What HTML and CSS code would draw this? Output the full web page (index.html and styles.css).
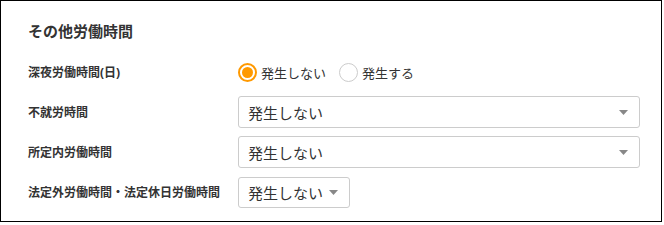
FILE: index.html
```html
<!DOCTYPE html>
<html lang="ja">
<head>
    <meta charset="UTF-8">
    <title>その他労働時間</title>
    <link rel="stylesheet" href="styles.css">
</head>
<body>
    <div class="panel">
        <h2>その他労働時間</h2>

        <div class="form-grid">
            <div class="label">深夜労働時間(日)</div>
            <div class="radio-group">
                <label class="radio checked">
                    <span class="circle"></span>
                    発生しない
                </label>
                <label class="radio">
                    <span class="circle"></span>
                    発生する
                </label>
            </div>

            <div class="label">不就労時間</div>
            <div class="select">
                <span>発生しない</span>
                <svg class="arrow" width="9" height="5" viewBox="0 0 9 5"><path d="M0 0h9L4.5 5z" fill="#888"/></svg>
            </div>

            <div class="label">所定内労働時間</div>
            <div class="select">
                <span>発生しない</span>
                <svg class="arrow" width="9" height="5" viewBox="0 0 9 5"><path d="M0 0h9L4.5 5z" fill="#888"/></svg>
            </div>

            <div class="label">法定外労働時間・法定休日労働時間</div>
            <div>
                <div class="select small">
                    <span>発生しない</span>
                    <svg class="arrow" width="9" height="5" viewBox="0 0 9 5"><path d="M0 0h9L4.5 5z" fill="#888"/></svg>
                </div>
            </div>
        </div>
    </div>
</body>
</html>
```

FILE: styles.css
```css
:root {
    --text: #333333;
    --border: #cccccc;
    --accent: #ff9900;
}

body {
    margin: 0;
    background: #ffffff;
    font-family: "Noto Sans", "Noto Sans CJK JP", sans-serif;
    color: var(--text);
}

.panel {
    box-sizing: border-box;
    width: 662px;
    height: 222px;
    border: 1px solid #000;
    padding: 19px 21px 0 27px;
}

h2 {
    margin: 0 0 14px;
    font-size: 15px;
    line-height: 22px;
    font-weight: 700;
}

.form-grid {
    display: grid;
    grid-template-columns: 210px 1fr;
    grid-auto-rows: 32px;
    row-gap: 8px;
    align-items: center;
}

.label {
    font-size: 12px;
    font-weight: 700;
}

.radio-group {
    display: flex;
    align-items: center;
    gap: 13px;
    font-size: 13px;
}

.radio {
    display: flex;
    align-items: center;
    gap: 4px;
    cursor: pointer;
}

.circle {
    box-sizing: border-box;
    width: 19px;
    height: 19px;
    border: 1px solid var(--border);
    border-radius: 50%;
    display: flex;
    align-items: center;
    justify-content: center;
}

.radio.checked .circle {
    border: 2px solid var(--accent);
}

.radio.checked .circle::after {
    content: "";
    width: 11px;
    height: 11px;
    border-radius: 50%;
    background: var(--accent);
}

.select {
    box-sizing: border-box;
    height: 32px;
    border: 1px solid var(--border);
    border-radius: 3px;
    padding: 0 11px 0 9px;
    display: flex;
    align-items: center;
    justify-content: space-between;
    font-size: 15px;
}

.select.small {
    width: 112px;
    height: 31px;
}
```
